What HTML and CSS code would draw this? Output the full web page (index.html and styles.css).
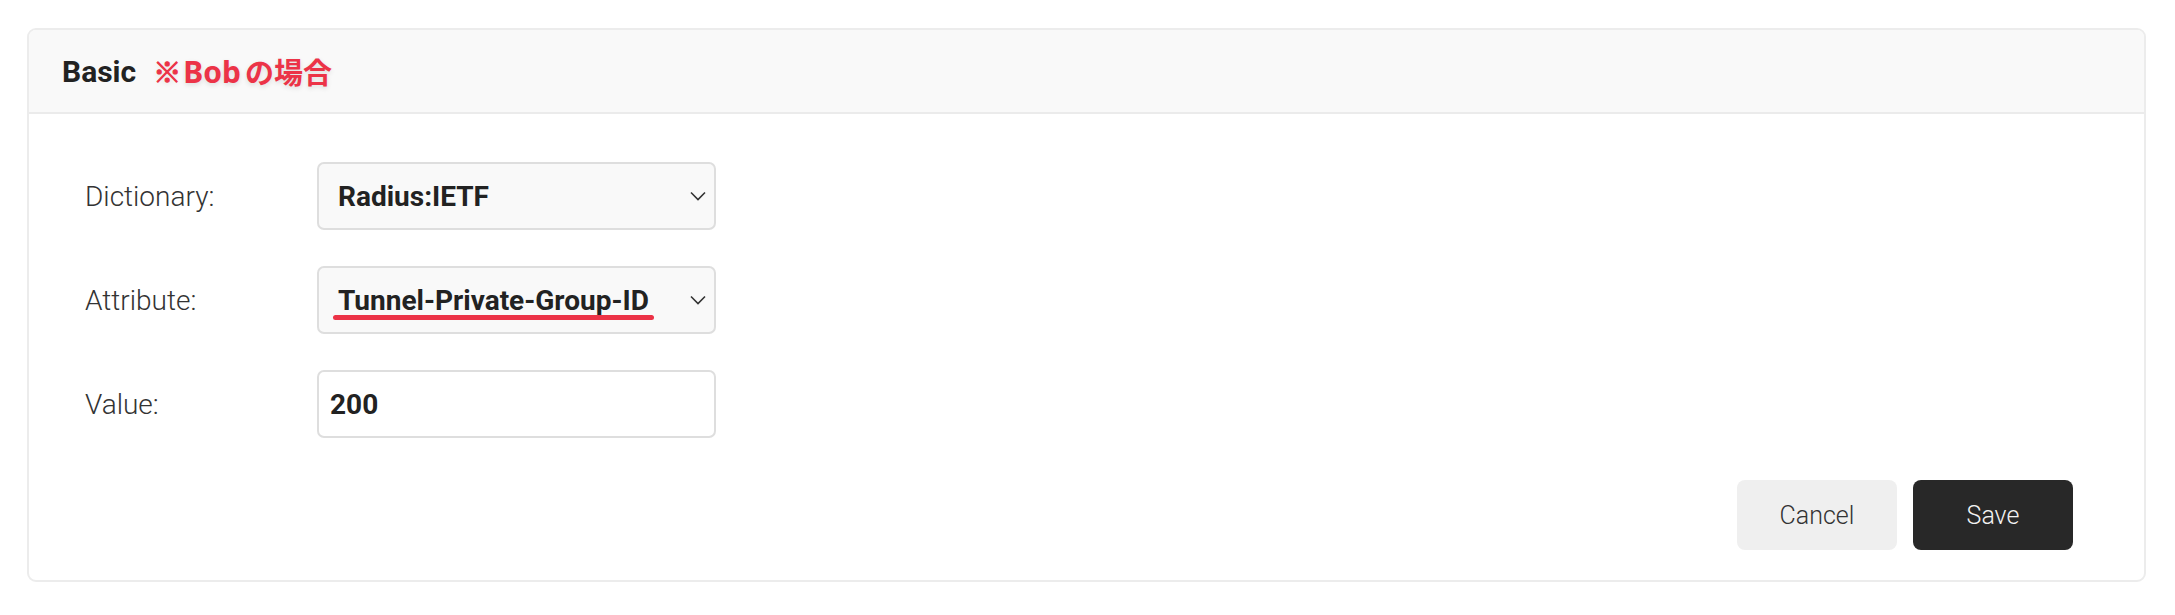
FILE: index.html
```html
<!DOCTYPE html>
<html lang="ja">
<head>
<meta charset="utf-8">
<title>Basic</title>
<link rel="stylesheet" href="styles.css">
</head>
<body>
<div class="card">
  <div class="card-header">
    <span class="title">Basic</span>
    <span class="note"><span class="kome">※</span><span class="latin">Bob</span><span class="jp">の場合</span></span>
  </div>
  <div class="card-body">
    <div class="form">
      <label class="label">Dictionary:</label>
      <div class="select">
        <span class="select-text">Radius:IETF</span>
        <svg class="chevron" width="16" height="10" viewBox="0 0 16 10"><path d="M1 1.5 L8 8.5 L15 1.5" fill="none" stroke="#333" stroke-width="1.6"/></svg>
      </div>
      <label class="label">Attribute:</label>
      <div class="select">
        <span class="select-text marked">Tunnel-Private-Group-ID</span>
        <svg class="chevron" width="16" height="10" viewBox="0 0 16 10"><path d="M1 1.5 L8 8.5 L15 1.5" fill="none" stroke="#333" stroke-width="1.6"/></svg>
      </div>
      <label class="label">Value:</label>
      <div class="input"><span class="input-text">200</span></div>
    </div>
    <div class="actions">
      <button class="btn btn-cancel">Cancel</button>
      <button class="btn btn-save">Save</button>
    </div>
  </div>
</div>
</body>
</html>
```
FILE: styles.css
```css
html, body {
  margin: 0;
  padding: 0;
  background: #ffffff;
}
body {
  padding: 28px 29px 0 27px;
  font-family: Roboto, "Noto Sans", sans-serif;
  color: #222;
}
.card {
  border: 2px solid #ececec;
  border-radius: 9px;
  overflow: hidden;
  background: #fff;
}
.card-header {
  height: 82px;
  background: #f9f9f9;
  border-bottom: 2px solid #ebebeb;
  display: flex;
  align-items: center;
  padding-left: 33px;
  gap: 17px;
}
.title {
  font-size: 30px;
  font-weight: 700;
  color: #222;
}
.note {
  font-family: "Noto Sans CJK JP", sans-serif;
  font-size: 29px;
  font-weight: 700;
  color: #ec3347;
  text-shadow: 0 2px 5px rgba(0, 0, 0, 0.12);
  display: flex;
  align-items: center;
}
.kome {
  font-size: 28px;
  -webkit-text-stroke: 1px #ec3347;
  margin-right: 2px;
}
.latin {
  font-family: "Noto Sans", sans-serif;
  font-size: 30px;
}
.jp {
  font-size: 29px;
  margin-left: 4px;
}
.card-body {
  padding: 48px 71px 30px 56px;
}
.form {
  display: grid;
  grid-template-columns: 232px 399px;
  row-gap: 36px;
  align-items: center;
}
.label {
  font-size: 28px;
  font-weight: 300;
  color: #333;
}
.select {
  box-sizing: border-box;
  height: 68px;
  border: 2px solid #dedede;
  border-radius: 7px;
  background: #f9f9f9;
  display: flex;
  align-items: center;
  justify-content: space-between;
  padding: 0 8px 0 19px;
}
.select-text {
  font-size: 28px;
  font-weight: 700;
  color: #222;
}
.marked {
  position: relative;
}
.marked::after {
  content: "";
  position: absolute;
  left: -5px;
  right: -5px;
  bottom: -3px;
  height: 5px;
  border-radius: 3px;
  background: #ec3347;
}
.chevron {
  display: block;
}
.input {
  box-sizing: border-box;
  height: 68px;
  border: 2px solid #dedede;
  border-radius: 7px;
  background: #fff;
  display: flex;
  align-items: center;
  padding-left: 11px;
}
.input-text {
  font-size: 28px;
  font-weight: 700;
  color: #222;
}
.actions {
  display: flex;
  justify-content: flex-end;
  gap: 16px;
  margin-top: 42px;
}
.btn {
  width: 160px;
  height: 70px;
  border: none;
  border-radius: 8px;
  font-family: Roboto, sans-serif;
  font-size: 25px;
  font-weight: 300;
}
.btn-cancel {
  background: #efefef;
  color: #333;
}
.btn-save {
  background: #282828;
  color: #f2f2f2;
}
```
